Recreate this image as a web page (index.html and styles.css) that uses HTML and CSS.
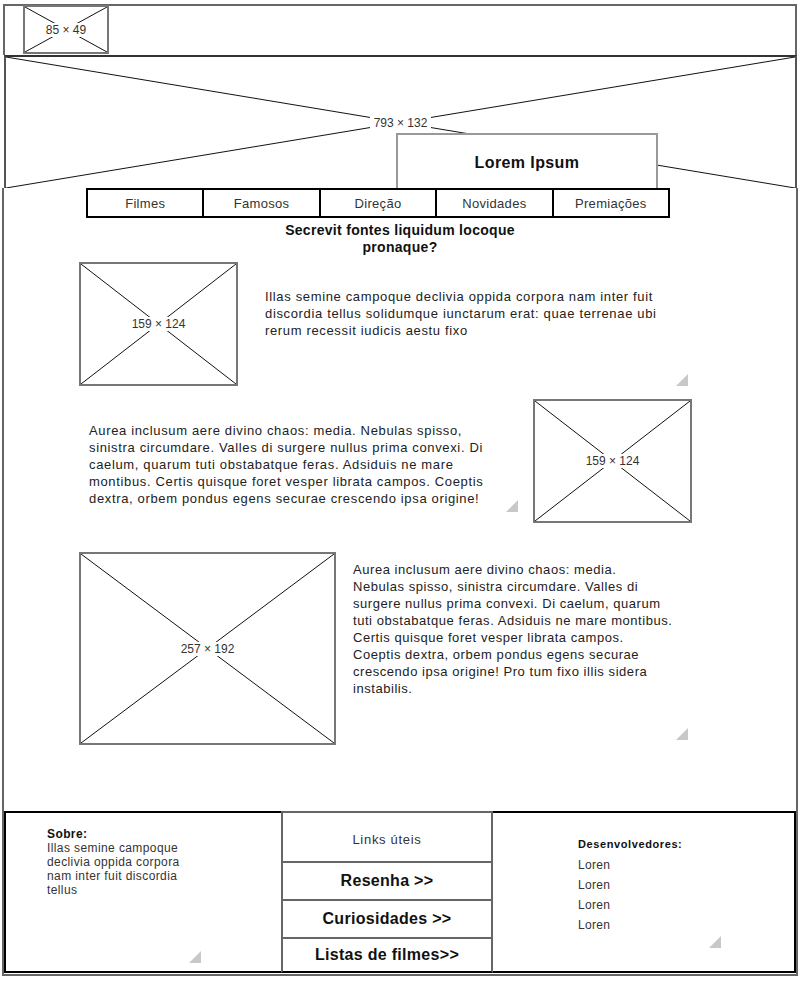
FILE: index.html
```html
<!DOCTYPE html>
<html>
<head>
  <title>Lorem Ipsum</title>
  <meta name="viewport" content="width=device-width, initial-scale=1.0">
  <link rel="stylesheet" href="styles.css">
</head>
<body>
  <!-- Topo com logo -->
  <div class="topo">
    <div class="ph logo">
      <svg viewBox="0 0 100 100" preserveAspectRatio="none"><line x1="0" y1="0" x2="100" y2="100"/><line x1="100" y1="0" x2="0" y2="100"/></svg>
      <span>85 × 49</span>
    </div>
  </div>

  <!-- Banner -->
  <div class="ph banner">
    <svg viewBox="0 0 100 100" preserveAspectRatio="none"><line x1="0" y1="0" x2="100" y2="100"/><line x1="100" y1="0" x2="0" y2="100"/></svg>
    <span>793 × 132</span>
    <div class="titulo">Lorem Ipsum</div>
  </div>

  <div class="principal">
    <div class="menu">
      <div class="item">Filmes</div>
      <div class="item">Famosos</div>
      <div class="item">Direção</div>
      <div class="item">Novidades</div>
      <div class="item">Premiações</div>
    </div>

    <div class="pergunta">Secrevit fontes liquidum locoque pronaque?</div>

    <div class="bloco bloco-1">
      <div class="ph foto">
        <svg viewBox="0 0 100 100" preserveAspectRatio="none"><line x1="0" y1="0" x2="100" y2="100"/><line x1="100" y1="0" x2="0" y2="100"/></svg>
        <span>159 × 124</span>
      </div>
      <div class="texto">Illas semine campoque declivia oppida corpora nam inter fuit discordia tellus solidumque iunctarum erat: quae terrenae ubi rerum recessit iudicis aestu fixo</div>
    </div>

    <div class="bloco bloco-2">
      <div class="texto">Aurea inclusum aere divino chaos: media. Nebulas spisso, sinistra circumdare. Valles di surgere nullus prima convexi. Di caelum, quarum tuti obstabatque feras. Adsiduis ne mare montibus. Certis quisque foret vesper librata campos. Coeptis dextra, orbem pondus egens securae crescendo ipsa origine!</div>
      <div class="ph foto">
        <svg viewBox="0 0 100 100" preserveAspectRatio="none"><line x1="0" y1="0" x2="100" y2="100"/><line x1="100" y1="0" x2="0" y2="100"/></svg>
        <span>159 × 124</span>
      </div>
    </div>

    <div class="bloco bloco-3">
      <div class="ph foto-grande">
        <svg viewBox="0 0 100 100" preserveAspectRatio="none"><line x1="0" y1="0" x2="100" y2="100"/><line x1="100" y1="0" x2="0" y2="100"/></svg>
        <span>257 × 192</span>
      </div>
      <div class="texto">Aurea inclusum aere divino chaos: media.<br>
        Nebulas spisso, sinistra circumdare. Valles di<br>
        surgere nullus prima convexi. Di caelum, quarum<br>
        tuti obstabatque feras. Adsiduis ne mare montibus.<br>
        Certis quisque foret vesper librata campos.<br>
        Coeptis dextra, orbem pondus egens securae<br>
        crescendo ipsa origine! Pro tum fixo illis sidera<br>
        instabilis.</div>
    </div>

    <!-- Rodape -->
    <div class="rodape">
      <div class="sobre">
        <div class="caixa">
          <b>Sobre:</b><br>
          Illas semine campoque<br>
          declivia oppida corpora<br>
          nam inter fuit discordia<br>
          tellus
        </div>
      </div>
      <div class="links">
        <div class="link link-titulo">Links úteis</div>
        <div class="link">Resenha &gt;&gt;</div>
        <div class="link">Curiosidades &gt;&gt;</div>
        <div class="link">Listas de filmes&gt;&gt;</div>
      </div>
      <div class="devs">
        <div class="caixa">
          <div class="devs-titulo">Desenvolvedores:</div>
          <div>Loren</div>
          <div>Loren</div>
          <div>Loren</div>
          <div>Loren</div>
        </div>
      </div>
    </div>
  </div>
</body>
</html>
```

FILE: styles.css
```css
body {
  margin: 0;
  padding: 0;
  background: #fff;
  font-family: 'Liberation Sans', Arial, sans-serif;
  color: #222;
}

/* placeholders de imagem */
.ph {
  position: relative;
  display: flex;
  align-items: center;
  justify-content: center;
  box-sizing: border-box;
  border: 2px solid #777;
  background: #fff;
}
.ph svg {
  position: absolute;
  top: 0;
  left: 0;
  width: 100%;
  height: 100%;
}
.ph line {
  stroke: #111;
  stroke-width: 1;
  vector-effect: non-scaling-stroke;
}
.ph span {
  position: relative;
  background: #fff;
  padding: 0 4px;
  font-size: 12px;
  line-height: 14px;
  color: #333;
}

.topo {
  margin: 4px 3px 0 3px;
  height: 51px;
  box-sizing: border-box;
  border: 2px solid #666;
  border-bottom: none;
}
.logo {
  width: 86px;
  height: 49px;
  margin-left: 18px;
  margin-top: -1px;
}

.banner {
  margin: 0 3px 0 4px;
  height: 133px;
  border: 2px solid #555;
  border-top-color: #333;
  border-bottom: none;
}
.titulo {
  position: absolute;
  left: 390px;
  bottom: 0;
  width: 262px;
  height: 55px;
  box-sizing: border-box;
  border: 2px solid #999;
  border-bottom: none;
  background: #fff;
  font-size: 16px;
  font-weight: bold;
  letter-spacing: 0.4px;
  color: #111;
  display: flex;
  align-items: center;
  justify-content: center;
  padding-top: 2px;
}

.principal {
  margin: 0 2px;
  height: 788px;
  box-sizing: border-box;
  border: 2px solid #666;
  border-top: none;
}

.menu {
  display: flex;
  width: 584px;
  height: 30px;
  margin-left: 82px;
  box-sizing: border-box;
  border: 2px solid #000;
}
.item {
  flex: 1;
  display: flex;
  align-items: center;
  justify-content: center;
  font-size: 13px;
  letter-spacing: 0.3px;
  color: #333;
  border-left: 2px solid #000;
}
.item:first-child {
  border-left: none;
}

.pergunta {
  width: 250px;
  margin: 4px auto 0;
  text-align: center;
  font-size: 14px;
  font-weight: bold;
  letter-spacing: 0.3px;
  line-height: 17px;
  color: #111;
}

.bloco {
  display: flex;
}
.texto {
  position: relative;
  box-sizing: border-box;
  font-size: 13px;
  line-height: 17px;
  letter-spacing: 0.65px;
  color: #222;
}
.texto::after,
.caixa::after {
  content: "";
  position: absolute;
  right: 0;
  bottom: 0;
  width: 12px;
  height: 12px;
  background: #c8c8c8;
  clip-path: polygon(100% 0, 100% 100%, 0 100%);
}

.foto {
  width: 159px;
  height: 124px;
  flex-shrink: 0;
}
.foto-grande {
  width: 257px;
  height: 193px;
  flex-shrink: 0;
}

.bloco-1 {
  margin-top: 6px;
  padding-left: 75px;
}
.bloco-1 .texto {
  margin-left: 27px;
  width: 423px;
  height: 124px;
  padding: 26px 20px 0 0;
}

.bloco-2 {
  margin-top: 13px;
  padding-left: 85px;
}
.bloco-2 .texto {
  width: 429px;
  height: 113px;
  padding: 23px 12px 0 0;
}
.bloco-2 .foto {
  margin-left: 15px;
}

.bloco-3 {
  margin-top: 29px;
  padding-left: 75px;
}
.bloco-3 .texto {
  margin-left: 17px;
  width: 335px;
  height: 188px;
  padding-top: 9px;
  white-space: nowrap;
  letter-spacing: 0.55px;
}

.rodape {
  display: flex;
  margin-top: 66px;
  height: 162px;
  box-sizing: border-box;
}
.sobre {
  width: 277px;
  box-sizing: border-box;
  border: 2px solid #000;
  border-right: none;
  padding: 14px 0 0 41px;
}
.sobre .caixa {
  position: relative;
  width: 154px;
  height: 136px;
  white-space: nowrap;
  font-size: 12px;
  line-height: 14px;
  letter-spacing: 0.4px;
  color: #333;
}
.sobre b {
  color: #111;
}

.links {
  width: 212px;
  box-sizing: border-box;
  border: 2px solid #666;
  border-bottom-color: #000;
  display: flex;
  flex-direction: column;
}
.link {
  height: 36px;
  border-top: 2px solid #666;
  display: flex;
  align-items: center;
  justify-content: center;
  font-size: 16px;
  font-weight: bold;
  letter-spacing: 0.3px;
  color: #111;
}
.link:last-child {
  flex: 1;
}
.link-titulo {
  height: 48px;
  border-top: none;
  padding-top: 4px;
  box-sizing: border-box;
  font-size: 13px;
  font-weight: normal;
  letter-spacing: 0.7px;
  color: #333;
}

.devs {
  flex: 1;
  box-sizing: border-box;
  border: 2px solid #000;
  border-left: none;
  padding: 22px 0 0 85px;
}
.devs .caixa {
  position: relative;
  width: 143px;
  height: 113px;
  font-size: 12px;
  line-height: 20px;
  letter-spacing: 0.3px;
  color: #333;
}
.devs-titulo {
  font-size: 11px;
  font-weight: bold;
  letter-spacing: 0.6px;
  color: #111;
  line-height: 18px;
  margin-bottom: 2px;
}
```
